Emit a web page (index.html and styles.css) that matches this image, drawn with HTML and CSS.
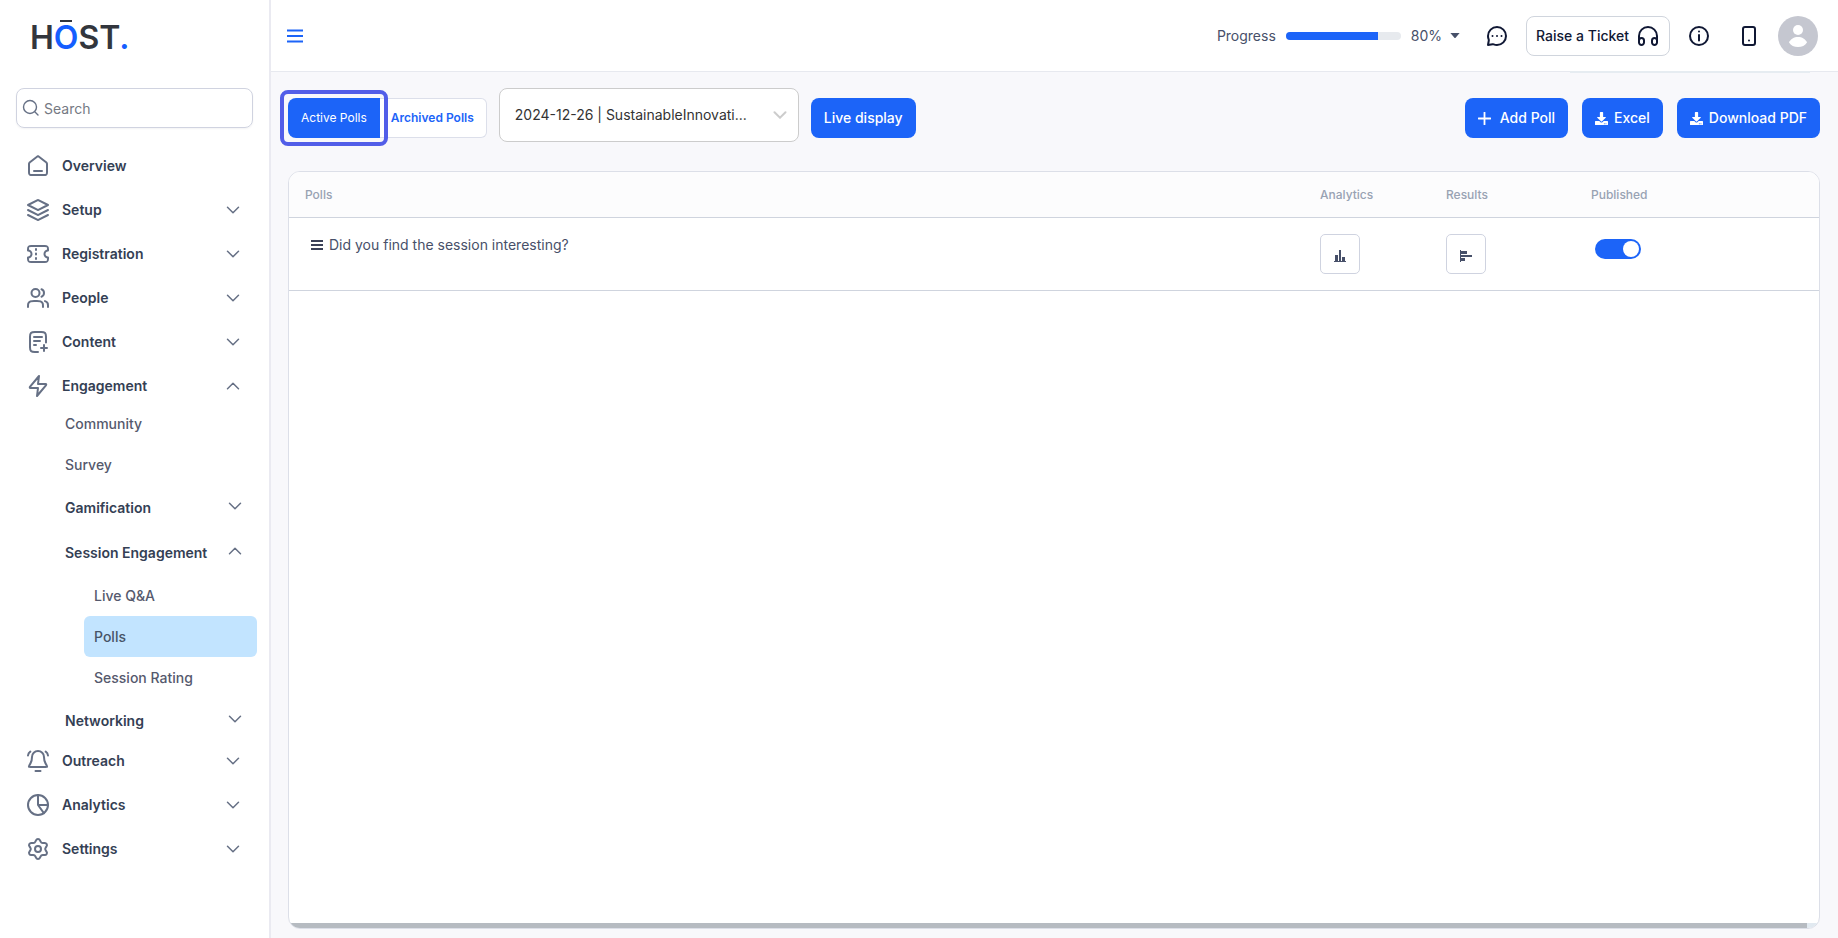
FILE: index.html
```html
<!DOCTYPE html>
<html lang="en">
<head>
<meta charset="utf-8">
<meta name="viewport" content="width=device-width, initial-scale=1">
<title>Polls</title>
<link rel="stylesheet" href="styles.css">
</head>
<body>
<svg class="defs" aria-hidden="true">
  <symbol id="down" viewBox="0 0 14 8"><path d="M1.5 1.2 7 6.7l5.500-5.500"/></symbol>
  <symbol id="up" viewBox="0 0 14 8"><path d="M1.500 6.700 7 1.200l5.500 5.500"/></symbol>
  <symbol id="download" viewBox="0 0 512 512"><path d="M216 0h80c13.300 0 24 10.700 24 24v168h87.700c17.800 0 26.700 21.500 14.100 34.100L269.700 378.300c-7.500 7.500-19.800 7.500-27.300 0L90.100 226.100c-12.600-12.600-3.700-34.100 14.100-34.100H192V24c0-13.300 10.700-24 24-24zm296 376v112c0 13.300-10.700 24-24 24H24c-13.300 0-24-10.700-24-24V376c0-13.300 10.700-24 24-24h146.700l49 49c20.100 20.100 52.500 20.100 72.600 0l49-49H488c13.300 0 24 10.700 24 24zm-124 88a20 20 0 1 0-40 0 20 20 0 0 0 40 0zm64 0a20 20 0 1 0-40 0 20 20 0 0 0 40 0z"/></symbol>
</svg>
<div class="app">
  <aside class="sidebar">
    <a class="logo" href="#" aria-label="Host">H<span class="logo-o">O</span>ST<span class="logo-dot">.</span></a>
    <label class="search">
      <svg viewBox="0 0 18 18" class="search-icon"><circle cx="8" cy="8" r="6.500"/><path d="m13 13 3 3"/></svg>
      <input type="search" placeholder="Search" aria-label="Search">
    </label>
    <nav class="nav">
      <a class="nav-item" href="#"><svg class="icon" viewBox="0 0 24 24"><path d="M8 17H16M11.018 2.764 4.235 8.039C3.782 8.392 3.555 8.568 3.392 8.789 3.247 8.984 3.140 9.205 3.074 9.439 3 9.704 3 9.991 3 10.565V17.800C3 18.920 3 19.480 3.218 19.908 3.410 20.284 3.716 20.590 4.092 20.782 4.520 21 5.080 21 6.200 21H17.800C18.920 21 19.480 21 19.908 20.782 20.284 20.590 20.590 20.284 20.782 19.908 21 19.480 21 18.920 21 17.800V10.565C21 9.991 21 9.704 20.926 9.439 20.860 9.205 20.753 8.984 20.608 8.789 20.445 8.568 20.218 8.392 19.765 8.039L12.982 2.764C12.631 2.491 12.455 2.354 12.261 2.302 12.090 2.255 11.910 2.255 11.739 2.302 11.545 2.354 11.369 2.491 11.018 2.764Z"/></svg><span>Overview</span></a>
      <button class="nav-item" type="button"><svg class="icon" viewBox="0 0 24 24"><path d="m2 12 9.640 4.820q.36.180.72 0L22 12M2 17l9.640 4.820q.36.180.72 0L22 17M2 7l9.640-4.820q.36-.18.720 0L22 7l-9.640 4.820q-.36.180-.72 0Z"/></svg><span>Setup</span><svg class="chev"><use href="#down"/></svg></button>
      <button class="nav-item" type="button"><svg class="icon" viewBox="0 0 24 24"><path d="M10 8V7M10 12.500V11.500M10 17V16M5.200 4H18.800C21.500 4 22 4.500 22 7.200V8.500A3.500 3.500 0 0 0 22 15.500V16.800C22 19.500 21.500 20 18.800 20H5.200C2.500 20 2 19.500 2 16.800V15.500A3.500 3.500 0 0 0 2 8.500V7.200C2 4.500 2.500 4 5.200 4Z"/></svg><span>Registration</span><svg class="chev"><use href="#down"/></svg></button>
      <button class="nav-item" type="button"><svg class="icon" viewBox="0 0 24 24"><path d="M22 21V19C22 17.136 20.725 15.570 19 15.126M15.500 3.291C16.966 3.884 18 5.321 18 7 18 8.679 16.966 10.116 15.500 10.709M17 21C17 19.136 17 18.204 16.696 17.469 16.290 16.489 15.511 15.711 14.531 15.305 13.796 15 12.864 15 11 15H8C6.136 15 5.204 15 4.469 15.305 3.489 15.711 2.710 16.489 2.304 17.469 2 18.204 2 19.136 2 21"/><circle cx="9.500" cy="7" r="4"/></svg><span>People</span><svg class="chev"><use href="#down"/></svg></button>
      <button class="nav-item" type="button"><svg class="icon" viewBox="0 0 24 24"><path d="M20 12.500V6.800C20 3 19 2 15.200 2H8.800C5 2 4 3 4 6.800V17.200C4 21 5 22 8.800 22H12M14 11H8M10 15H8M16 7H8M18 21V15M15 18H21"/></svg><span>Content</span><svg class="chev"><use href="#down"/></svg></button>
      <button class="nav-item" type="button" aria-expanded="true"><svg class="icon" viewBox="0 0 24 24"><path d="M13 2 4.093 12.688C3.600 13.300 3.600 14 4.400 14H12L11 22l8.907-10.688C20.400 10.700 20.400 10 19.600 10H12Z"/></svg><span>Engagement</span><svg class="chev"><use href="#up"/></svg></button>
      <div class="subnav">
        <a class="sub-item" href="#">Community</a>
        <a class="sub-item" href="#">Survey</a>
        <button class="sub-head" type="button"><span>Gamification</span><svg class="chev"><use href="#down"/></svg></button>
        <button class="sub-head" type="button" aria-expanded="true"><span>Session Engagement</span><svg class="chev"><use href="#up"/></svg></button>
        <div class="leafnav">
          <a class="leaf" href="#">Live Q&amp;A</a>
          <a class="leaf current" href="#" aria-current="page">Polls</a>
          <a class="leaf" href="#">Session Rating</a>
        </div>
        <button class="sub-head" type="button"><span>Networking</span><svg class="chev"><use href="#down"/></svg></button>
      </div>
      <button class="nav-item" type="button"><svg class="icon" viewBox="0 0 24 24"><path d="M9.500 22H14.500M18 8A6 6 0 0 0 6 8C6 11.090 5.220 13.206 4.350 14.605 3.200 16.400 2.600 17.400 2.900 17.800 3.100 18 3.700 18 4.500 18H19.500C20.300 18 20.900 18 21.100 17.800 21.400 17.400 20.800 16.400 19.650 14.605 18.780 13.206 18 11.090 18 8ZM2 6.500C2.150 4.700 2.900 3.500 4.300 2.600M22 6.500C21.850 4.700 21.100 3.500 19.700 2.600"/></svg><span>Outreach</span><svg class="chev"><use href="#down"/></svg></button>
      <button class="nav-item" type="button"><svg class="icon" viewBox="0 0 24 24"><circle cx="12" cy="12" r="10"/><path d="M12 2V12H22M12 12 17.900 20.100"/></svg><span>Analytics</span><svg class="chev"><use href="#down"/></svg></button>
      <button class="nav-item" type="button"><svg class="icon" viewBox="0 0 24 24"><path d="M9.395 19.371 9.980 20.686A2.214 2.214 0 0 0 14.024 20.686L14.608 19.371A2.430 2.430 0 0 1 17.078 17.948L18.508 18.100A2.214 2.214 0 0 0 20.531 14.598L19.684 13.434A2.430 2.430 0 0 1 19.688 10.571L20.535 9.408A2.214 2.214 0 0 0 18.513 5.906L17.083 6.058A2.430 2.430 0 0 1 14.613 4.629L14.024 3.314A2.214 2.214 0 0 0 9.980 3.314L9.395 4.629A2.430 2.430 0 0 1 6.925 6.058L5.491 5.906A2.214 2.214 0 0 0 3.468 9.408L4.315 10.571A2.430 2.430 0 0 1 4.315 13.429L3.468 14.592A2.214 2.214 0 0 0 5.491 18.094L6.921 17.942A2.430 2.430 0 0 1 9.395 19.371Z"/><circle cx="12" cy="12" r="3"/></svg><span>Settings</span><svg class="chev"><use href="#down"/></svg></button>
    </nav>
  </aside>

  <div class="main">
    <header class="topbar">
      <button class="icon-btn" type="button" aria-label="Toggle menu"><svg class="menu-icon" viewBox="0 0 16 14"><path d="M0 1.500H16M0 7H16M0 12.500H16"/></svg></button>
      <div class="progress">
        <span id="progress-label">Progress</span>
        <div class="bar" role="progressbar" aria-labelledby="progress-label" aria-valuenow="80"><div class="bar-fill" style="width:80%"></div></div>
        <button class="percent" type="button">80%<svg viewBox="0 0 10 5"><path d="M.4 0h9.200L5.600 4.700q-.6.600-1.200 0z"/></svg></button>
      </div>
      <button class="icon-btn chat-btn" type="button" aria-label="Messages"><svg class="icon" viewBox="0 0 24 24"><path d="M7.500 12H7.510M12 12H12.010M16.500 12H16.510M12 21A9 9 0 1 0 3 12C3 13.200 3.230 14.340 3.660 15.390 3.800 15.750 3.850 15.900 3.800 16.500L3 21 7.600 20.350C8.200 20.280 8.350 20.280 8.700 20.400A9 9 0 0 0 12 21Z"/></svg></button>
      <button class="ticket" type="button"><span>Raise a Ticket</span><svg class="icon" viewBox="0 0 24 24"><path d="M3 18V12A9 9 0 0 1 21 12V18M5.500 21A2.500 2.500 0 0 1 3 18.500V16.500A2.500 2.500 0 0 1 8 16.500V18.500A2.500 2.500 0 0 1 5.500 21ZM18.500 21A2.500 2.500 0 0 1 16 18.500V16.500A2.500 2.500 0 0 1 21 16.500V18.500A2.500 2.500 0 0 1 18.500 21Z"/></svg></button>
      <button class="icon-btn info-btn" type="button" aria-label="Information"><svg class="icon" viewBox="0 0 24 24"><circle cx="12" cy="12" r="9"/><path d="M12 16.500V11M12 7.500V7.510"/></svg></button>
      <button class="icon-btn phone-btn" type="button" aria-label="Mobile preview"><svg class="icon" viewBox="0 0 24 24"><rect x="6" y="3" width="12" height="18" rx="2"/><path d="M12 16.500V16.510"/></svg></button>
      <button class="icon-btn" type="button" aria-label="Account"><svg class="avatar" viewBox="0 0 40 40"><circle cx="20" cy="20" r="20" fill="#c5c7d0"/><circle cx="20" cy="14" r="5" fill="#fff"/><path d="M11 26.500C12.500 23 16 21 20 21s7.500 2 9 5.500C27 29.500 24 31 20 31s-7-1.500-9-4.500Z" fill="#fff"/></svg></button>
      <span class="topbar-tab"></span>
    </header>

    <main class="content">
      <div class="toolbar">
        <div class="tabs">
          <button class="tab active" type="button">Active Polls</button>
          <button class="tab" type="button">Archived Polls</button>
        </div>
        <div class="select">
          <select aria-label="Session"><option>2024-12-26 | SustainableInnovati...</option></select>
          <svg viewBox="0 0 14 8"><path d="M1.500 1.200 7 6.700l5.500-5.500"/></svg>
        </div>
        <button class="btn" type="button">Live display</button>
        <div class="actions">
          <button class="btn add" type="button"><svg viewBox="0 0 13 13"><path d="M6.500.5v12M.5 6.500h12" fill="none" stroke="currentColor" stroke-width="1.800" stroke-linecap="round"/></svg>Add Poll</button>
          <button class="btn" type="button"><svg><use href="#download"/></svg>Excel</button>
          <button class="btn" type="button"><svg><use href="#download"/></svg>Download PDF</button>
        </div>
      </div>

      <section class="panel">
        <div class="panel-body">
          <table class="polls">
            <thead>
              <tr><th>Polls</th><th class="col-analytics">Analytics</th><th class="col-results">Results</th><th class="col-published">Published</th></tr>
            </thead>
            <tbody>
              <tr>
                <td><div class="question"><svg viewBox="0 0 12 10"><path d="M0 1H12M0 5H12M0 9H12"/></svg><span>Did you find the session interesting?</span></div></td>
                <td><button class="square" type="button" aria-label="Analytics"><svg viewBox="0 0 12 12"><path d="M0 11h12v1H0zM1 5h3v6H1zM5 0h2v11H5zM8 7h3v4H8z"/></svg></button></td>
                <td><button class="square" type="button" aria-label="Results"><svg viewBox="0 0 12 12"><path d="M0 0h1v12H0zM1 1h6v3H1zM1 5h11v2H1zM1 8h4v3H1z"/></svg></button></td>
                <td><input class="toggle" type="checkbox" checked aria-label="Published"></td>
              </tr>
            </tbody>
          </table>
        </div>
        <div class="scrollbar"><div class="scroll-thumb"></div></div>
      </section>
    </main>
  </div>
</div>
</body>
</html>
```
FILE: styles.css
```css
*, *::before, *::after { box-sizing: border-box; }

body {
  margin: 0;
  font: 14px/20px Inter, "Liberation Sans", sans-serif;
  color: #475069;
  background: #f8f8fb;
}

button, input, select { font: inherit; color: inherit; }
button { padding: 0; border: 0; background: none; text-align: left; cursor: pointer; }
a { color: inherit; text-decoration: none; }
svg { display: block; flex: none; }

.defs { position: absolute; width: 0; height: 0; }

.icon {
  width: 24px;
  height: 24px;
  fill: none;
  stroke: currentColor;
  stroke-width: 2;
  stroke-linecap: round;
  stroke-linejoin: round;
}

.app { display: flex; min-height: 100vh; }

/* Sidebar */
.sidebar {
  flex: none;
  width: 271px;
  background: #fff;
  border-right: 2px solid #eaeaf1;
}

.logo {
  display: block;
  width: max-content;
  margin: 18px 0 30px 30px;
  font-size: 32px;
  line-height: 40px;
  font-weight: 600;
  color: #32363d;
}
.logo-o { position: relative; color: #155eff; }
.logo-o::before {
  content: "";
  position: absolute;
  top: 2px;
  left: 6px;
  right: 6px;
  height: 2px;
  background: #32363d;
}
.logo-dot { color: #155eff; }

.search {
  display: flex;
  align-items: center;
  gap: 4px;
  height: 40px;
  margin: 0 16px 16px;
  padding: 0 5px;
  border: 1px solid #d0d3e0;
  border-radius: 8px;
  box-shadow: 0 1px 2px rgba(16, 24, 40, .05);
}
.search-icon { width: 18px; height: 18px; fill: none; stroke: #667085; stroke-width: 1.4; stroke-linecap: round; }
.search input { flex: 1; min-width: 0; padding: 2px 0 0; border: 0; outline: 0; background: none; }
.search input::placeholder { color: #757983; opacity: 1; }

.nav { display: flex; flex-direction: column; }

.nav-item {
  display: flex;
  align-items: center;
  gap: 12px;
  height: 44px;
  padding: 0 29px 0 26px;
  font-weight: 600;
  color: #344054;
}
.nav-item .icon { color: #667085; }
.chev {
  width: 14px;
  height: 8px;
  margin-left: auto;
  fill: none;
  stroke: #667085;
  stroke-width: 1.5;
  stroke-linecap: round;
  stroke-linejoin: round;
}

.subnav { display: flex; flex-direction: column; margin: -5px 12px -4px 65px; }
.sub-item, .leaf { display: flex; align-items: center; height: 41px; font-weight: 500; color: #55596d; }
.sub-head {
  display: flex;
  align-items: center;
  height: 45px;
  padding-right: 15px;
  font-weight: 600;
  color: #344054;
}
.sub-head .chev { margin-bottom: 4px; }
.leafnav { margin-left: 19px; }
.leaf { padding-left: 10px; border-radius: 6px; }
.leaf.current { background: #c2e4ff; color: #475467; }

/* Main column */
.main { flex: 1; min-width: 0; display: flex; flex-direction: column; }

.topbar {
  position: relative;
  display: flex;
  align-items: center;
  height: 72px;
  padding: 0 20px 0 16px;
  background: #fff;
  border-bottom: 1px solid #e7e9ef;
  color: #101834;
}
.topbar-tab { position: absolute; top: 71px; right: 28px; width: 240px; height: 2px; background: #e6ecf1; }
.menu-icon { width: 16px; height: 14px; stroke: #1c64f8; stroke-width: 2; }

.progress { display: flex; align-items: center; gap: 10px; margin-left: auto; color: #475069; }
.bar { width: 115px; height: 8px; border-radius: 4px; background: #e7eaee; overflow: hidden; }
.bar-fill { height: 100%; background: #1c64f8; }
.percent { display: flex; align-items: center; gap: 8px; }
.percent svg { width: 10px; height: 5px; fill: currentColor; }

.chat-btn { margin-left: 25px; }
.ticket {
  display: flex;
  align-items: center;
  gap: 7px;
  height: 40px;
  margin-left: 17px;
  padding: 0 9px;
  border: 1px solid #d0d5dd;
  border-radius: 8px;
  font-weight: 500;
}
.info-btn { margin-left: 17px; }
.phone-btn { margin-left: 26px; }
.phone-btn + .icon-btn { margin-left: 17px; }
.avatar { width: 40px; height: 40px; }

.content { flex: 1; display: flex; flex-direction: column; padding: 16px 18px 9px 17px; }

.toolbar { display: flex; align-items: center; gap: 12px; min-height: 60px; }

.tabs { position: relative; display: flex; height: 40px; }
.tabs::after {
  content: "";
  position: absolute;
  top: -8px;
  left: -8px;
  width: 108px;
  height: 56px;
  border: 4px solid #525ee8;
  border-radius: 8px;
  pointer-events: none;
}
.tab {
  padding: 0 12px 0 11px;
  border: 1px solid #dcdfea;
  border-left: 0;
  border-radius: 0 6px 6px 0;
  background: #fff;
  color: #1c64f8;
  font-size: 12px;
  font-weight: 600;
}
.tab.active {
  padding: 0 13px;
  border: 0;
  border-radius: 8px 0 0 8px;
  background: #1c64f8;
  color: #fff;
  font-weight: 400;
}

.select { position: relative; align-self: flex-start; width: 300px; height: 54px; }
.select select {
  appearance: none;
  width: 100%;
  height: 100%;
  padding: 0 48px 0 15px;
  border: 1px solid #ccc;
  border-radius: 8px;
  background: #fff;
  color: #333;
}
.select svg {
  position: absolute;
  top: 23px;
  right: 12px;
  width: 14px;
  height: 8px;
  fill: none;
  stroke: #ccc;
  stroke-width: 2;
  stroke-linecap: round;
  pointer-events: none;
}

.btn {
  display: flex;
  align-items: center;
  gap: 6px;
  height: 40px;
  padding: 0 13px;
  border-radius: 8px;
  background: #1c64f8;
  color: #fff;
  font-weight: 500;
}
.btn svg { width: 13px; height: 13px; fill: currentColor; }
.btn.add { gap: 9px; }
.actions { display: flex; gap: 14px; margin-left: auto; }

/* Polls table */
.panel {
  flex: 1;
  display: flex;
  flex-direction: column;
  margin-top: 23px;
  border: 1px solid #dcdfe8;
  border-radius: 12px;
  background: #fff;
  overflow: hidden;
}
.panel-body { flex: 1; }
.polls { width: 100%; border-collapse: separate; border-spacing: 0; table-layout: fixed; }
.polls th {
  height: 46px;
  padding: 0 16px;
  background: #fcfcfd;
  border-bottom: 1px solid #cfd4de;
  color: #98a2b3;
  font-size: 12px;
  font-weight: 500;
  text-align: left;
}
.polls td { height: 73px; padding: 16px; vertical-align: top; border-bottom: 1px solid #cfd4de; }
.polls .col-analytics { width: 126px; }
.polls .col-results { width: 145px; }
.polls .col-published { width: 244px; }

.question { display: flex; align-items: center; gap: 6px; padding: 1px 0 0 6px; }
.question svg { width: 12px; height: 10px; stroke: #3b4158; stroke-width: 2; }

.square {
  display: grid;
  place-items: center;
  width: 40px;
  height: 40px;
  padding-top: 4px;
  border: 1px solid #cfd3e0;
  border-radius: 5px;
  background: #fff;
}
.square svg { width: 12px; height: 12px; fill: #475069; }

.toggle {
  appearance: none;
  display: flex;
  align-items: center;
  justify-content: flex-end;
  width: 46px;
  height: 20px;
  margin: 5px 4px;
  padding: 0 2px;
  border-radius: 10px;
  background: #1c64f8;
  cursor: pointer;
}
.toggle::before { content: ""; width: 16px; height: 16px; border-radius: 50%; background: #fff; }
.toggle:not(:checked) { justify-content: flex-start; background: #c5c7d0; }

.scrollbar { height: 5px; padding-right: 12px; background: #e1e9f0; }
.scroll-thumb { height: 5px; background: #b6bbc1; }
```
